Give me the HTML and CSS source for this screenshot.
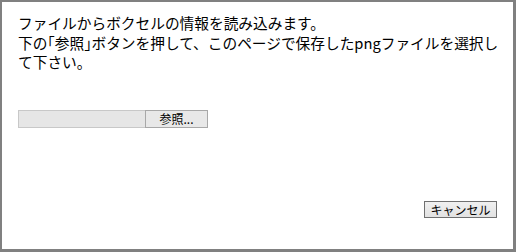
FILE: index.html
```html
<!DOCTYPE html>
<html lang="ja">
<head>
    <meta charset="UTF-8">
    <title>ファイルから読み込み</title>
    <link rel="stylesheet" href="styles.css">
</head>
<body>
    <div class="dialog">
        <p class="message">ファイルからボクセルの情報を読み込みます。<br>下の<span class="bracket">「</span>参照<span class="bracket">」</span>ボタンを押して、このページで保存したpngファイルを選択して下さい。</p>
        <div class="file-input">
            <span class="file-name"></span>
            <button class="browse-btn">参照...</button>
        </div>
        <div class="actions">
            <button class="cancel-btn">キャンセル</button>
        </div>
    </div>
</body>
</html>
```

FILE: styles.css
```css
body {
    margin: 0;
    padding: 0;
    background-color: #fff;
    font-family: "Noto Sans CJK JP", "Liberation Sans", sans-serif;
    color: #000;
}

.dialog {
    box-sizing: border-box;
    width: 516px;
    height: 252px;
    border-style: solid;
    border-color: #808080;
    border-width: 2px 3px 3px 2px;
    padding: 11px 8px 0 16px;
    display: flex;
    flex-direction: column;
}

.message {
    margin: 0;
    font-size: 14.7px;
    line-height: 19.5px;
}

/* narrow brackets like the original bitmap font */
.message .bracket {
    font-feature-settings: "halt";
}

.file-input {
    display: flex;
    margin-top: 38px;
    height: 18px;
}

.file-name {
    box-sizing: border-box;
    width: 127px;
    height: 18px;
    background-color: #e6e6e6;
    border: 1px solid #c8c8c8;
    border-right: none;
}

.browse-btn {
    box-sizing: border-box;
    width: 63px;
    height: 18px;
    padding: 0;
    background-color: #e8e8e8;
    border: 1px solid #a8a8a8;
    font-family: inherit;
    font-size: 12px;
    line-height: 16px;
    color: #000;
}

.actions {
    margin-top: auto;
    margin-bottom: 31px;
    margin-right: 8px;
    display: flex;
    justify-content: flex-end;
}

.cancel-btn {
    box-sizing: border-box;
    width: 73px;
    height: 17px;
    padding: 0;
    background: linear-gradient(#f0f0f0, #e2e2e2);
    border: 1px solid #707070;
    font-family: inherit;
    font-size: 12px;
    line-height: 15px;
    color: #000;
}
```
